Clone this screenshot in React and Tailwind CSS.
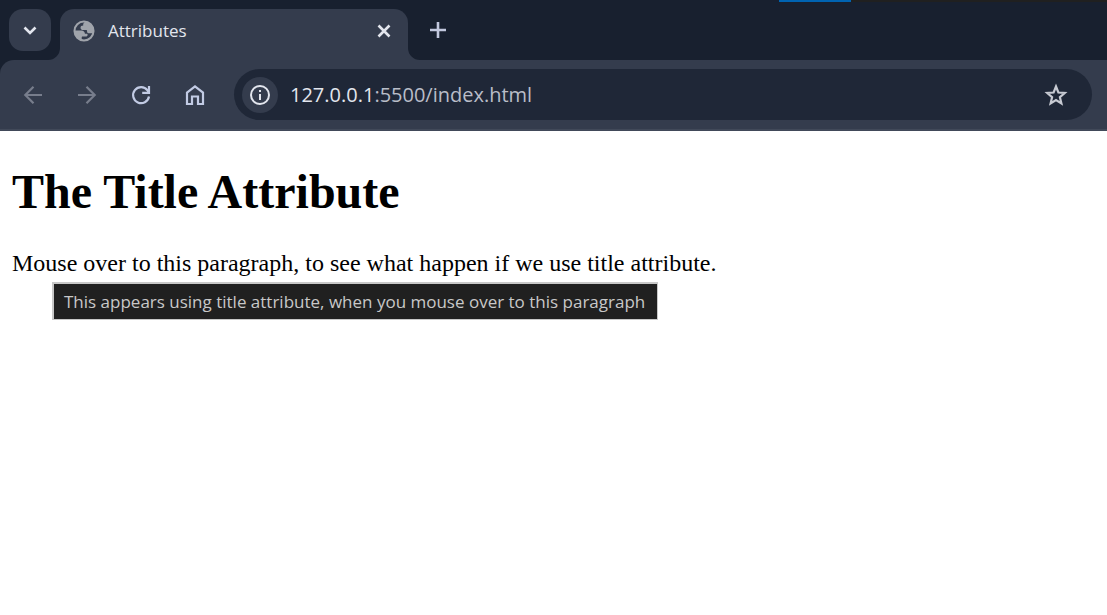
import React from "react";

function Icon({ children, className = "" }) {
  return (
    <svg viewBox="0 0 24 24" className={"shrink-0 " + className} fill="none" stroke="currentColor" strokeWidth="2" aria-hidden="true">
      {children}
    </svg>
  );
}

function TabStrip() {
  return (
    <header className="flex h-15 items-end bg-[#18202f]">
      <div className="flex h-15 w-12 shrink-0 items-start pt-[9px] pl-[9px]">
        <button aria-label="Search tabs" className="flex size-[42px] shrink-0 items-center justify-center rounded-[14px] bg-[#343c4d] text-[#e3e6ee]">
          <Icon className="size-6"><path d="M6.5 9.5 12 15l5.500-5.500" strokeWidth="2.600" /></Icon>
        </button>
      </div>
      <svg viewBox="0 0 12 12" className="size-3 shrink-0" aria-hidden="true">
        <path d="M12 0A12 12 0 0 1 0 12H12Z" fill="#343c4d" />
      </svg>
      <div className="flex h-[51px] w-[348px] items-center rounded-t-[14px] bg-[#343c4d] pr-3 pb-2 pl-[13px]">
        <Icon className="size-[22px] text-[#a0a4ab]">
          <circle cx="12" cy="12" r="10.4" strokeWidth="2.200" />
          <path d="M13.500 1.500c-2.500 2-2.500 3-2.300 4.500-2 0-3 .8-3 2.500s1.300 2.500 3 2.500h3.300c.6 0 .8.500.8 1.200 0 1.700 1 2.300 2.700 2.300H22.500A10.500 10.500 0 0 0 13.500 1.500ZM1.500 11.500h7.500c2.500 0 4 1.500 4 3.500h2.500c1 1.500.2 3-1.500 3h-3.500c-.8 0-1 .6-1 1.400V22.500A10.500 10.500 0 0 1 1.500 11.500Z" fill="currentColor" stroke="none" />
        </Icon>
        <span className="ml-[13px] grow text-[17px] leading-6 text-[#e3e6ee]">Attributes</span>
        <button aria-label="Close tab" className="flex size-6 items-center justify-center text-[#e3e6ee]">
          <Icon className="size-6"><path d="m6.500 6.500 11 11m0-11-11 11" strokeWidth="2.600" /></Icon>
        </button>
      </div>
      <svg viewBox="0 0 12 12" className="size-3 shrink-0" aria-hidden="true">
        <path d="M0 0A12 12 0 0 0 12 12H0Z" fill="#343c4d" />
      </svg>
      <button aria-label="New tab" className="mb-[18px] ml-[6px] flex size-6 items-center justify-center text-[#c2c8de]">
        <Icon className="size-6"><path d="M12 4v16M4 12h16" strokeWidth="2.600" /></Icon>
      </button>
      <div className="ml-auto flex w-[328px] self-start bg-[#202020]">
        <div className="h-[2px] w-18 bg-[#0063b1]" />
      </div>
    </header>
  );
}

function Toolbar() {
  return (
    <div className="bg-[#18202f]">
      <nav className="flex h-[71px] items-center rounded-tl-[14px] border-b-2 border-[#414959] bg-[#343c4d] pr-[15px] pl-[21px] text-[#c2cbe4]">
        <div className="flex gap-[30px]">
          <button aria-label="Back" className="text-[#777d8c]">
            <Icon className="size-6"><path d="M21 12H4.500M12.500 3.800 4.300 12l8.200 8.200" strokeWidth="2.200" /></Icon>
          </button>
          <button aria-label="Forward" className="text-[#777d8c]">
            <Icon className="size-6"><path d="M3 12h16.500M11.500 3.800l8.200 8.200-8.200 8.200" strokeWidth="2.200" /></Icon>
          </button>
          <button aria-label="Reload">
            <Icon className="size-6"><path d="M20 13.500A8 8 0 1 1 18.500 7.300L20 9.500M20 3v6.800h-6.800" strokeWidth="2.200" /></Icon>
          </button>
          <button aria-label="Home">
            <Icon className="size-6"><path d="M4 9.600 12 3.300l8 6.300V21h-5v-7.500H9V21H4Z" strokeWidth="2.200" /></Icon>
          </button>
        </div>
        <div className="ml-[27px] flex h-[51px] grow items-center rounded-full bg-[#1f2737] pr-6 pl-2">
          <button aria-label="View site information" className="flex size-9 shrink-0 items-center justify-center rounded-full bg-[#343c4d] text-[#e3e6ee]">
            <Icon className="size-6"><circle cx="12" cy="12" r="9" /><path d="M12 11v6M12 7v2" /></Icon>
          </button>
          <div className="ml-3 grow text-[20px] leading-7 text-[#b9bdc8]">
            <span className="text-[#e3e6ee]">127.0.0.1</span>:5500/index.html
          </div>
          <button aria-label="Bookmark this tab" className="text-[#c7cad2]">
            <Icon className="size-6"><path d="m12 3.500 2.400 6 6.400.500-4.900 4.200 1.500 6.300-5.400-3.400-5.400 3.400 1.500-6.300L3.200 10l6.400-.500Z" strokeWidth="2.200" /></Icon>
          </button>
        </div>
      </nav>
    </div>
  );
}

export default function App() {
  return (
    <div className="min-h-screen bg-white font-['Open_Sans','Noto_Sans',sans-serif]">
      <TabStrip />
      <Toolbar />
      <main className="px-3 pt-8 font-['Liberation_Serif',serif] text-black">
        <h1 className="text-[48px] leading-[58px] font-bold">The Title Attribute</h1>
        <div className="relative mt-[30px]">
          <p className="text-[24px] leading-6">Mouse over to this paragraph, to see what happen if we use title attribute.</p>
          <div role="tooltip" className="absolute top-[31px] left-10 border-t-2 border-r border-b border-l-2 border-[#c8c8c8] bg-[#202020] pr-3 pl-[10px] font-['Open_Sans','Noto_Sans',sans-serif] text-[17px] leading-[35px] whitespace-nowrap text-[#c8c8c8]">
            This appears using title attribute, when you mouse over to this paragraph
          </div>
        </div>
      </main>
    </div>
  );
}
